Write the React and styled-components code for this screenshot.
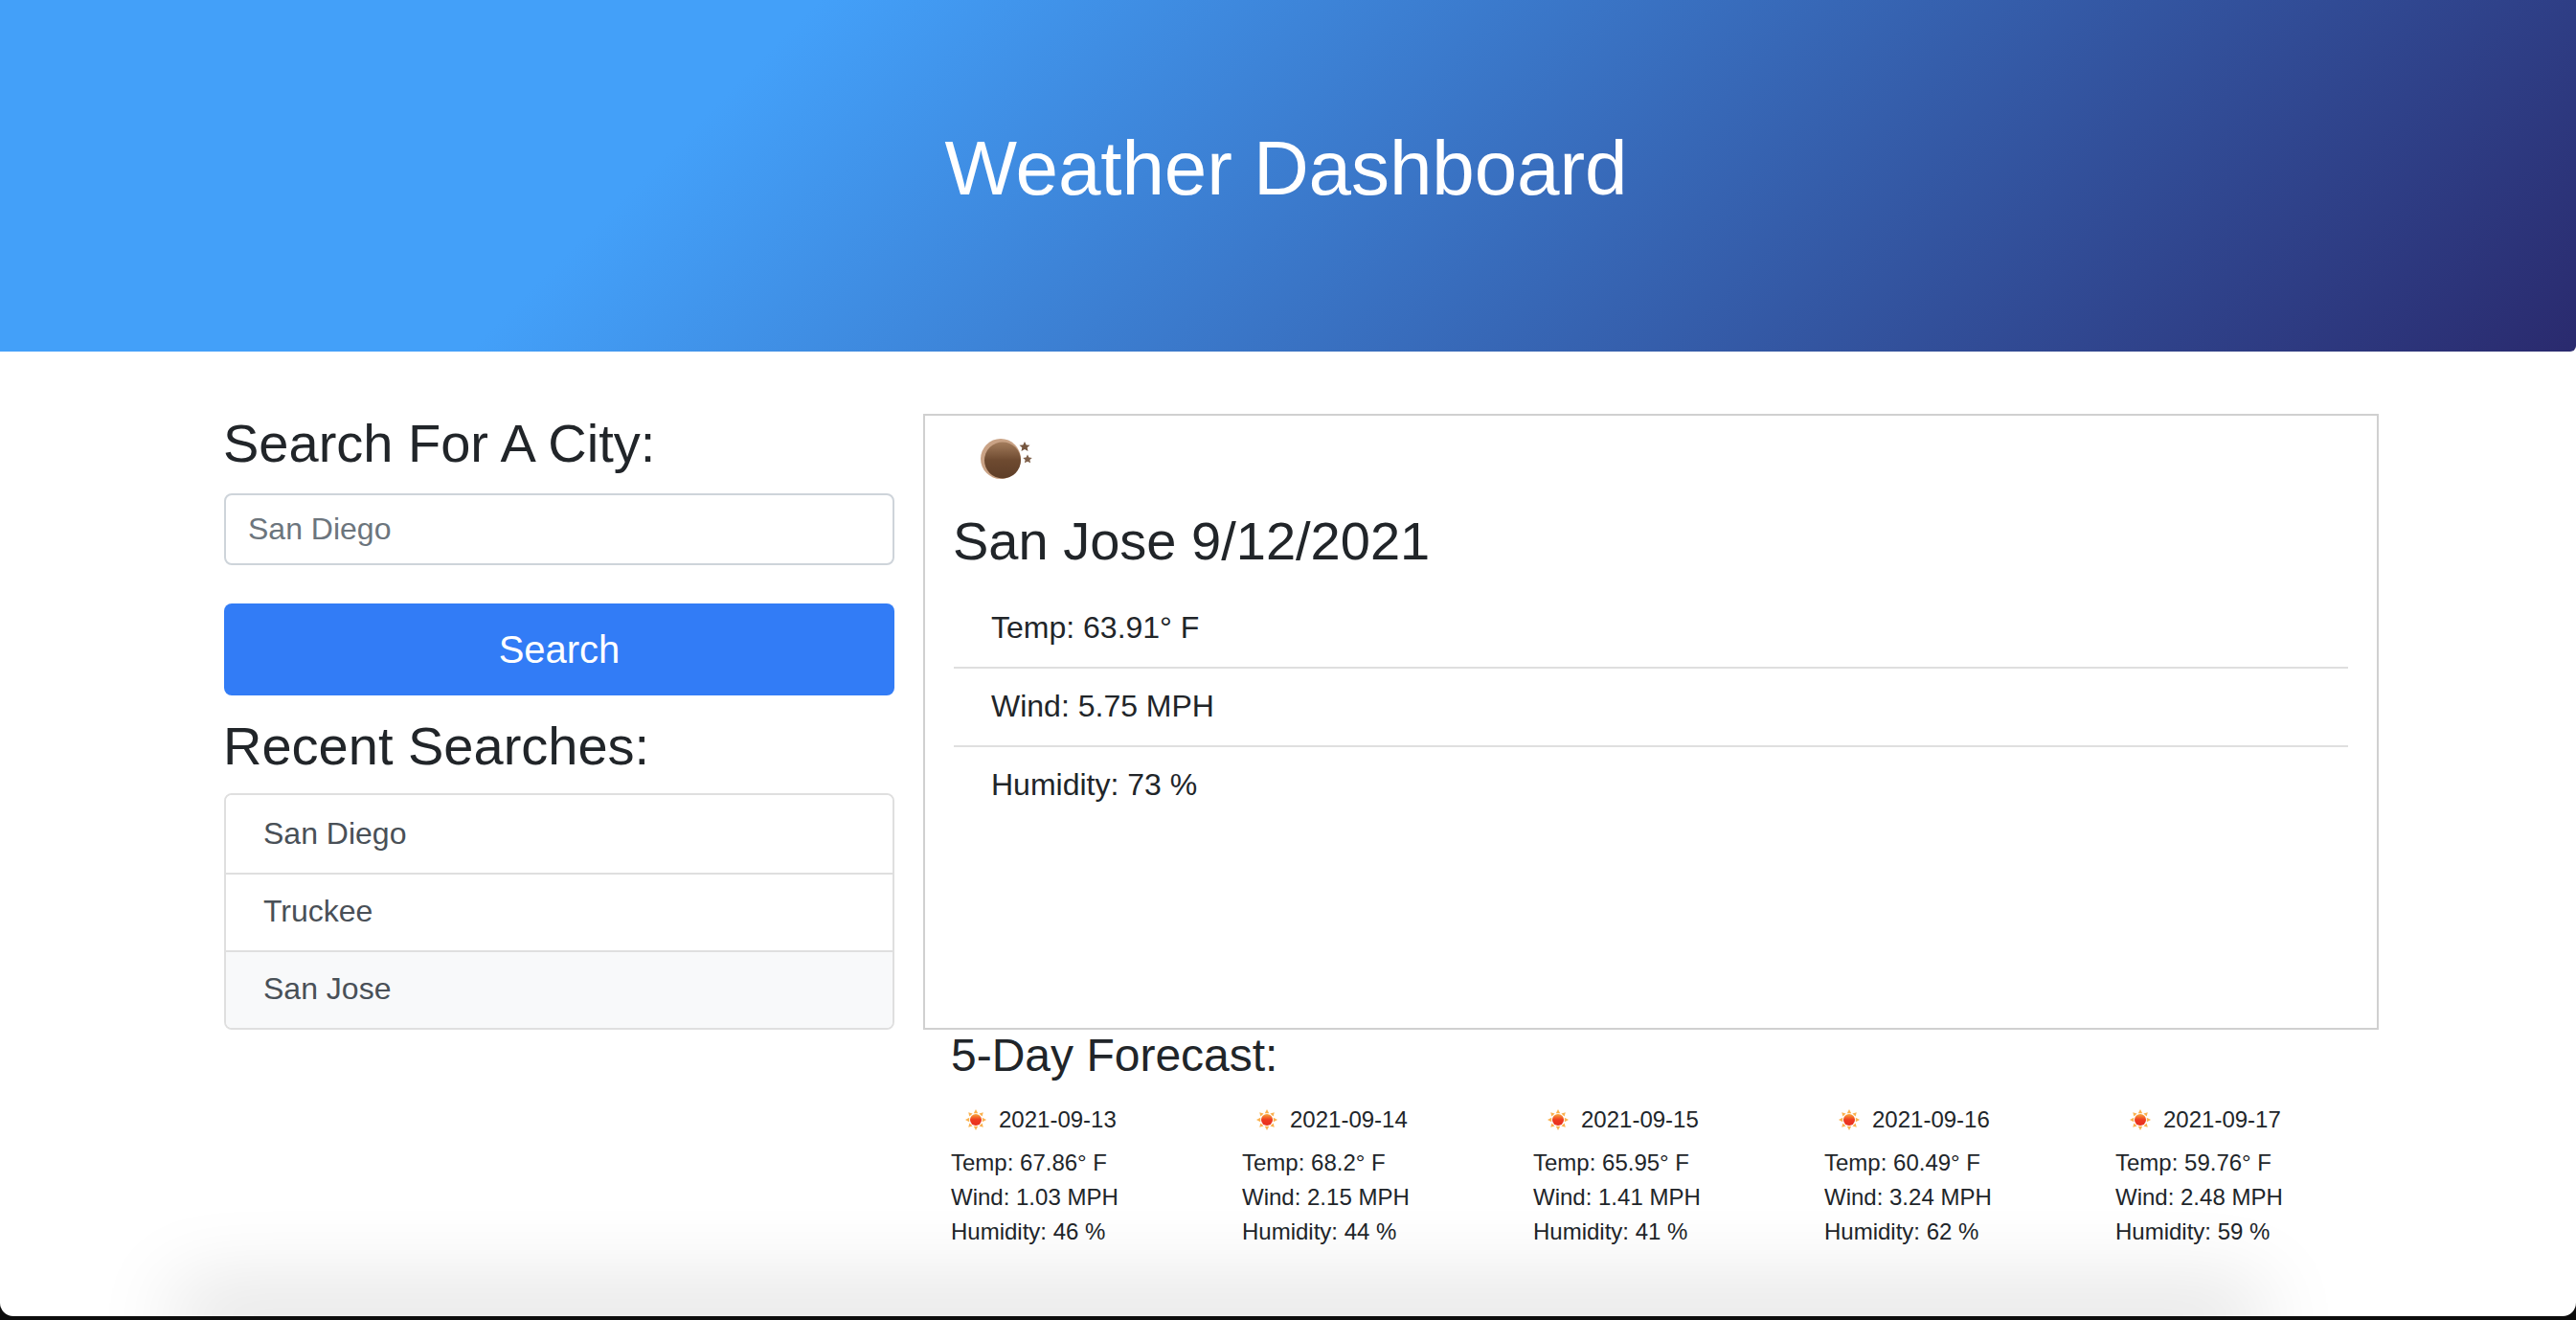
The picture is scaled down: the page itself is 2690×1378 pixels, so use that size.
import React from "react";
import styled, { createGlobalStyle } from "styled-components";

const forecast = [
  { date: "2021-09-13", temp: "67.86", wind: "1.03", humidity: 46 },
  { date: "2021-09-14", temp: "68.2", wind: "2.15", humidity: 44 },
  { date: "2021-09-15", temp: "65.95", wind: "1.41", humidity: 41 },
  { date: "2021-09-16", temp: "60.49", wind: "3.24", humidity: 62 },
  { date: "2021-09-17", temp: "59.76", wind: "2.48", humidity: 59 },
];

const recent = ["San Diego", "Truckee", "San Jose"];

function SunIcon({ id }) {
  return (
    <SoftSvg width="24" height="24" viewBox="0 0 24 24">
      <defs>
        <linearGradient id={id} x1="0" y1="0" x2="0" y2="1">
          <stop offset="0" stopColor="#f9a63a" />
          <stop offset="0.5" stopColor="#ee3a20" />
          <stop offset="1" stopColor="#e8301f" />
        </linearGradient>
      </defs>
      <g fill="#fab14e">
        <path d="M12 1l2.2 4.2h-4.4z" />
        <path d="M12 23l2.2-4.2h-4.4z" />
        <path d="M1 12l4.2-2.2v4.4z" />
        <path d="M23 12l-4.2-2.2v4.4z" />
        <path d="M4.2 4.2l4.4 1.2-3.2 3.2z" />
        <path d="M19.8 4.2l-4.4 1.2 3.2 3.2z" />
        <path d="M4.2 19.8l4.4-1.2-3.2-3.2z" />
        <path d="M19.8 19.8l-4.4-1.2 3.2-3.2z" />
      </g>
      <circle cx="12" cy="12" r="6" fill={`url(#${id})`} />
    </SoftSvg>
  );
}

function NightIcon() {
  return (
    <SoftSvg width="60" height="50" viewBox="0 0 60 50">
      <defs>
        <linearGradient id="moonBody" x1="0" y1="0" x2="0" y2="1">
          <stop offset="0" stopColor="#a37c5c" />
          <stop offset="0.5" stopColor="#6e4a30" />
          <stop offset="1" stopColor="#5e3e28" />
        </linearGradient>
      </defs>
      <circle cx="21" cy="26" r="21" fill="#c9a285" />
      <circle cx="23" cy="27.5" r="19" fill="url(#moonBody)" />
      <path d="M46 8l1.7 3.4 3.8.4-2.8 2.5.8 3.7-3.5-1.9-3.5 1.9.8-3.7-2.8-2.5 3.8-.4z" fill="#75563f" />
      <path d="M49 21.5l1.5 3 3.3.4-2.4 2.2.7 3.2-3.1-1.6-3.1 1.6.7-3.2-2.4-2.2 3.3-.4z" fill="#7f614b" />
    </SoftSvg>
  );
}

function App() {
  return (
    <Page>
      <GlobalStyle />
      <Window>
        <Header>
          <Title>Weather Dashboard</Title>
        </Header>
        <Main>
          <Sidebar>
            <SectionTitle>Search For A City:</SectionTitle>
            <SearchInput placeholder="San Diego" />
            <SearchButton>Search</SearchButton>
            <RecentTitle>Recent Searches:</RecentTitle>
            <RecentList>
              {recent.map((city) => (
                <RecentItem key={city} $active={city === "San Jose"}>
                  {city}
                </RecentItem>
              ))}
            </RecentList>
          </Sidebar>
          <Content>
            <CurrentCard>
              <IconRow>
                <NightIcon />
              </IconRow>
              <CityTitle>San Jose 9/12/2021</CityTitle>
              <StatList>
                <StatRow>Temp: 63.91° F</StatRow>
                <StatRow>Wind: 5.75 MPH</StatRow>
                <StatRow>Humidity: 73 %</StatRow>
              </StatList>
            </CurrentCard>
            <ForecastTitle>5-Day Forecast:</ForecastTitle>
            <ForecastGrid>
              {forecast.map((day) => (
                <ForecastDay key={day.date}>
                  <DayHead>
                    <SunIcon id={`sun-${day.date}`} />
                    <span>{day.date}</span>
                  </DayHead>
                  <DayLine>Temp: {day.temp}° F</DayLine>
                  <DayLine>Wind: {day.wind} MPH</DayLine>
                  <DayLine>Humidity: {day.humidity} %</DayLine>
                </ForecastDay>
              ))}
            </ForecastGrid>
          </Content>
        </Main>
        <BottomShadow />
      </Window>
    </Page>
  );
}

const GlobalStyle = createGlobalStyle`
  * {
    box-sizing: border-box;
  }
  body {
    margin: 0;
    background: #0d0d0d;
    font-family: "Liberation Sans", Arial, sans-serif;
    color: #212529;
  }
`;
const SoftSvg = styled.svg`
  flex: none;
  filter: blur(0.5px);
`;
const Page = styled.div`
  width: 2690px;
  height: 1378px;
  overflow: hidden;
  background: #0d0d0d;
`;
const Window = styled.div`
  position: relative;
  display: flex;
  flex-direction: column;
  height: 1374px;
  background: #fff;
  overflow: hidden;
  border-radius: 0 0 14px 14px;
`;
const Header = styled.header`
  display: flex;
  justify-content: center;
  height: 367px;
  padding: 128px 4px 0 0;
  background: linear-gradient(135deg, #43a0f9 28%, #2a2a6e 100%);
  border-radius: 0 0 6px 0;
`;
const Title = styled.h1`
  margin: 0;
  font-size: 80px;
  font-weight: 400;
  line-height: 96px;
  letter-spacing: -0.1px;
  color: #fff;
`;
const Main = styled.main`
  display: grid;
  grid-template-columns: 700px 1520px;
  column-gap: 30px;
  padding: 65px 0 0 234px;
`;
const Sidebar = styled.div`
  display: flex;
  flex-direction: column;
`;
const SectionTitle = styled.h3`
  margin: 0 0 22px -1px;
  font-size: 56px;
  font-weight: 400;
  line-height: 61px;
`;
const SearchInput = styled.input`
  display: block;
  width: 100%;
  height: 75px;
  padding: 0 23px;
  border: 2px solid #ced4da;
  border-radius: 8px;
  font-family: inherit;
  font-size: 32px;
  outline: none;
  &::placeholder {
    color: #6c757d;
    opacity: 1;
  }
`;
const SearchButton = styled.button`
  width: 100%;
  height: 96px;
  margin-top: 40px;
  border: none;
  border-radius: 8px;
  background: #327cf6;
  color: #fff;
  font-family: inherit;
  font-size: 40px;
`;
const RecentTitle = styled(SectionTitle)`
  margin: 22px 0 19px -1px;
`;
const RecentList = styled.ul`
  margin: 0;
  padding: 0;
  list-style: none;
  border: 2px solid #dfdfdf;
  border-radius: 8px;
  overflow: hidden;
`;
const RecentItem = styled.li`
  height: 81px;
  padding: 0 39px;
  display: flex;
  align-items: center;
  font-size: 32px;
  color: #495057;
  background: ${(p) => (p.$active ? "#f8f9fa" : "#fff")};
  & + & {
    border-top: 2px solid #dfdfdf;
    padding-bottom: 2px;
  }
`;
const Content = styled.div`
  display: flex;
  flex-direction: column;
`;
const CurrentCard = styled.section`
  height: 643px;
  padding: 0 30px;
  border: 2px solid #d0d0d0;
`;
const IconRow = styled.div`
  display: flex;
  height: 97px;
  padding: 19px 0 0 28px;
`;
const CityTitle = styled.h2`
  margin: 0 0 16px -1px;
  font-size: 56px;
  font-weight: 400;
  line-height: 67px;
`;
const StatList = styled.ul`
  margin: 0;
  padding: 0;
  list-style: none;
`;
const StatRow = styled.li`
  display: flex;
  align-items: center;
  height: 82px;
  padding: 0 39px;
  font-size: 32px;
  color: #212529;
  & + & {
    border-top: 2px solid #dfdfdf;
    padding-bottom: 2px;
  }
`;
const ForecastTitle = styled.h4`
  margin: 0 0 19px 29px;
  font-size: 48px;
  font-weight: 400;
  line-height: 54px;
`;
const ForecastGrid = styled.div`
  display: grid;
  grid-template-columns: repeat(5, 304px);
  padding-left: 29px;
`;
const ForecastDay = styled.div`
  display: flex;
  flex-direction: column;
`;
const DayHead = styled.div`
  display: flex;
  align-items: center;
  gap: 12px;
  height: 42px;
  padding-left: 14px;
  margin-bottom: 6px;
  font-size: 24px;
`;
const DayLine = styled.div`
  font-size: 24px;
  line-height: 36px;
`;
const BottomShadow = styled.div`
  position: absolute;
  left: 215px;
  right: 360px;
  bottom: -2px;
  height: 2px;
  box-shadow: 0 0 85px 32px rgba(0, 0, 0, 0.125);
`;

export default App;
